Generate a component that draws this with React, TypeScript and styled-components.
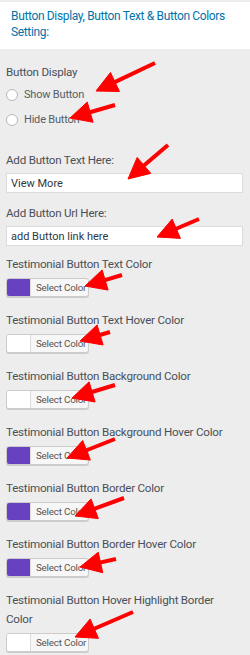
import styled, { createGlobalStyle } from 'styled-components';

const GlobalStyle = createGlobalStyle`
  html, body {
    margin: 0;
    padding: 0;
    background: #ededed;
  }
  body {
    font-family: Roboto, 'Liberation Sans', Arial, sans-serif;
    color: #50575e;
  }
`;

interface ColorOption {
  label: string;
  color: string;
}
interface SpacingProps {
  mt?: number;
}
interface SwatchProps {
  color: string;
}
interface ArrowProps {
  from: [number, number];
  to: [number, number];
}

const colorOptions: ColorOption[] = [
  { label: 'Testimonial Button Text Color', color: '#6741c0' },
  { label: 'Testimonial Button Text Hover Color', color: '#ffffff' },
  { label: 'Testimonial Button Background Color', color: '#ffffff' },
  { label: 'Testimonial Button Background Hover Color', color: '#6741c0' },
  { label: 'Testimonial Button Border Color', color: '#6741c0' },
  { label: 'Testimonial Button Border Hover Color', color: '#6741c0' },
  { label: 'Testimonial Button Hover Highlight Border Color', color: '#ffffff' },
];

const arrows: ArrowProps[] = [
  { from: [155, 63], to: [96, 91] },
  { from: [115, 105], to: [70, 118] },
  { from: [168, 145], to: [128, 179] },
  { from: [199, 219], to: [157, 237] },
  { from: [122, 275], to: [85, 286] },
  { from: [110, 332], to: [80, 341] },
  { from: [115, 385], to: [72, 398] },
  { from: [115, 439], to: [67, 458] },
  { from: [124, 498], to: [75, 516] },
  { from: [116, 559], to: [80, 567] },
  { from: [133, 612], to: [75, 637] },
];

const Page = styled.div`
  position: relative;
  width: 250px;
  min-height: 655px;
  padding-top: 2px;
  box-sizing: border-box;
`;

const Header = styled.div`
  background: #fff;
  padding: 6px 4px 9px 11px;
  min-height: 47px;
  box-sizing: border-box;
`;

const Title = styled.h3`
  margin: 0;
  font-size: 12px;
  font-weight: 400;
  line-height: 16px;
  letter-spacing: -0.35px;
  color: #0073aa;
`;

const Body = styled.div`
  padding: 14px 7px 0 6px;
`;

const Group = styled.div<SpacingProps>`
  display: flex;
  flex-direction: column;
  margin-top: ${(props) => props.mt ?? 0}px;
`;

const Label = styled.div`
  max-width: 228px;
  font-size: 11.6px;
  line-height: 19px;
  letter-spacing: -0.22px;
  color: #4a5058;
`;

const RadioRow = styled.label`
  display: flex;
  align-items: center;
  height: 25px;
  font-size: 11px;
  letter-spacing: -0.2px;
  color: #555d66;
`;

const RadioCircle = styled.span`
  width: 12px;
  height: 12px;
  border-radius: 50%;
  border: 1px solid #b4b9be;
  background: #fff;
  box-sizing: border-box;
  margin-right: 6px;
`;

const TextInput = styled.input`
  margin-top: 3px;
  height: 20px;
  width: 100%;
  box-sizing: border-box;
  border: 1px solid #dcdcde;
  background: #fff;
  padding: 0 4px;
  font-family: Roboto, 'Liberation Sans', Arial, sans-serif;
  font-size: 11px;
  color: #32373c;
  outline: none;
`;

const Picker = styled.div`
  margin-top: 4px;
  display: flex;
  align-items: stretch;
  width: 83px;
  height: 19px;
  box-sizing: border-box;
  border: 1px solid #ccc;
  border-radius: 3px;
  box-shadow: 0 1px 0 #ccc;
  background: #f7f7f7;
  overflow: hidden;
`;

const Swatch = styled.span<SwatchProps>`
  width: 23px;
  background: ${(props) => props.color};
  border-right: 1px solid #dcdcdc;
`;

const PickerText = styled.span`
  display: flex;
  align-items: center;
  padding-left: 5px;
  font-size: 9.8px;
  letter-spacing: -0.2px;
  color: #555;
`;

const Overlay = styled.svg`
  position: absolute;
  left: 0;
  top: 0;
  pointer-events: none;
`;

const Arrow = ({ from, to }: ArrowProps) => {
  const dx = from[0] - to[0];
  const dy = from[1] - to[1];
  const len = Math.hypot(dx, dy);
  const ux = dx / len;
  const uy = dy / len;
  const bx = to[0] + ux * 21;
  const by = to[1] + uy * 21;
  const nx = -uy * 10.5;
  const ny = ux * 10.5;
  return (
    <g fill='#ff0000' stroke='#ff0000'>
      <line
        x1={from[0]}
        y1={from[1]}
        x2={bx - ux * 2}
        y2={by - uy * 2}
        strokeWidth={4}
      />
      <polygon
        points={`${to[0]},${to[1]} ${bx + nx},${by + ny} ${bx - nx},${by - ny}`}
        strokeWidth={1}
        strokeLinejoin='round'
      />
    </g>
  );
};

const App = () => {
  return (
    <Page>
      <GlobalStyle />
      <Header>
        <Title>
          Button Display, Button Text &amp; Button Colors
          <br />
          Setting:
        </Title>
      </Header>

      <Body>
        <Group>
          <Label>Button Display</Label>
          <RadioRow>
            <RadioCircle />
            Show Button
          </RadioRow>
          <RadioRow>
            <RadioCircle />
            Hide Button
          </RadioRow>
        </Group>

        <Group mt={19}>
          <Label>Add Button Text Here:</Label>
          <TextInput defaultValue='View More' />
        </Group>

        <Group mt={11}>
          <Label>Add Button Url Here:</Label>
          <TextInput defaultValue='add Button link here' />
        </Group>

        {colorOptions.map((option, i) => (
          <Group key={option.label} mt={i === 0 ? 9 : 14}>
            <Label>{option.label}</Label>
            <Picker>
              <Swatch color={option.color} />
              <PickerText>Select Color</PickerText>
            </Picker>
          </Group>
        ))}
      </Body>

      <Overlay width='250' height='655' viewBox='0 0 250 655'>
        {arrows.map((arrow, i) => (
          <Arrow key={i} from={arrow.from} to={arrow.to} />
        ))}
      </Overlay>
    </Page>
  );
};

export default App;
